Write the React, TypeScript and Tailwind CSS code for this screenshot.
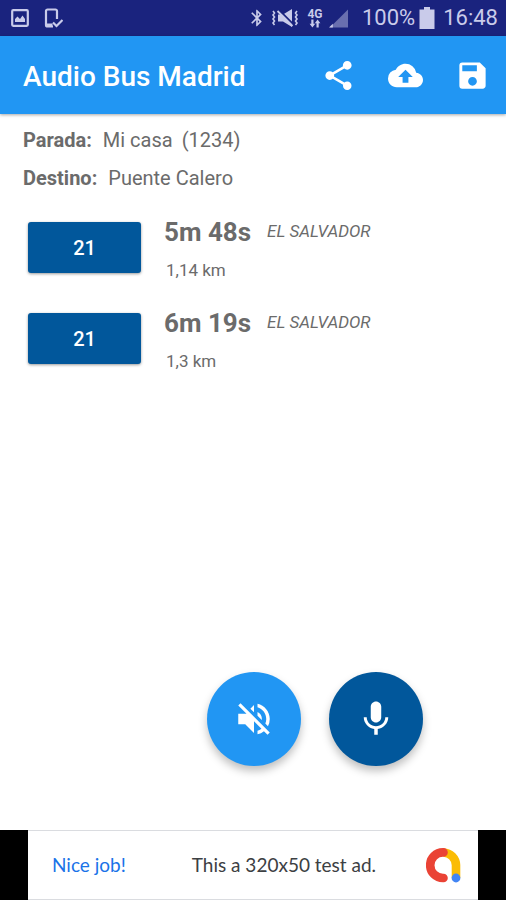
import type { ReactNode } from "react";
import {
  MdBluetooth,
  MdCloudUpload,
  MdMic,
  MdSave,
  MdShare,
  MdVolumeOff,
} from "react-icons/md";
import { clsx } from "clsx";

interface Arrival {
  id: number;
  line: string;
  time: string;
  destination: string;
  distance: string;
}

const arrivals: Arrival[] = [
  { id: 1, line: "21", time: "5m 48s", destination: "EL SALVADOR", distance: "1,14 km" },
  { id: 2, line: "21", time: "6m 19s", destination: "EL SALVADOR", distance: "1,3 km" },
];

const PictureIcon = () => (
  <svg className="h-[18px] w-[18px]" viewBox="0 0 18 18" fill="none" aria-hidden="true">
    <rect x="1.2" y="1.2" width="15.6" height="15.6" rx="1" stroke="currentColor" strokeWidth="2.2" />
    <path d="M4 13v-3l2.500-2.500L9 10l2.500-3.500L14 10v3z" fill="currentColor" />
  </svg>
);

const PhoneCheckIcon = () => (
  <svg className="h-5 w-5" viewBox="0 0 20 20" fill="none" aria-hidden="true">
    <path
      d="M14 11V3a1.500 1.500 0 0 0-1.500-1.500h-8A1.500 1.500 0 0 0 3 3v14a1.500 1.500 0 0 0 1.500 1.500H10"
      stroke="currentColor"
      strokeWidth="2.2"
    />
    <path d="M3 15.500h6.500V19H3z" fill="currentColor" />
    <path d="M10 14.500l3.500 3.500 6-6" stroke="currentColor" strokeWidth="2.2" />
  </svg>
);

const VibrateMuteIcon = () => (
  <svg className="h-5 w-7" viewBox="0 0 28 20" fill="none" aria-hidden="true">
    <path
      d="M2 3l1.500 2L2 7l1.500 2L2 11l1.500 2L2 15l1.500 2M26 3l-1.500 2L26 7l-1.500 2L26 11l-1.500 2 1.500 2-1.500 2"
      stroke="currentColor"
      strokeWidth="1.600"
    />
    <path d="M7 6.500h5l9-5.500v18l-9-5.500H7z" fill="currentColor" />
    <path d="M8 2l14 14" stroke="#1a237e" strokeWidth="1.800" />
    <path d="M6.500 3l15 15" stroke="currentColor" strokeWidth="1.800" />
  </svg>
);

const NetworkIcon = () => (
  <span className="flex w-4 flex-col items-center">
    <span className="text-[12px] leading-[10px] font-bold">4G</span>
    <svg className="h-[9px] w-3" viewBox="0 0 12 8" fill="currentColor" aria-hidden="true">
      <path d="M2.300 0h2.200v4.300H6.200L3.400 8 .6 4.300h1.700zM7.500 8h2.200V3.700h1.700L8.600 0 5.800 3.700h1.700z" />
    </svg>
  </span>
);

const SignalIcon = () => (
  <svg className="h-[19px] w-[19px]" viewBox="0 0 20 19" fill="currentColor" aria-hidden="true">
    <path d="M20 0v19H1z" opacity="0.45" />
    <path d="M0 19h4v-4z" />
  </svg>
);

const BatteryIcon = () => (
  <svg className="h-[22px] w-4" viewBox="0 0 16 22" fill="currentColor" aria-hidden="true">
    <path d="M5 0h6v2.500h4.500V22H.5V2.500H5z" />
  </svg>
);

const AdLogo = () => (
  <svg className="h-[35px] w-[35px]" viewBox="0 0 35 35" fill="none" aria-hidden="true">
    <path d="M17.500 4.500A13 13 0 0 1 30 17v13" stroke="#fbbc04" strokeWidth="8.600" />
    <path
      d="M17.500 4.400h-.5a12.800 12.800 0 0 0 0 25.600h.5"
      stroke="#ea4335"
      strokeWidth="8.600"
      strokeLinecap="round"
    />
    <circle cx="30" cy="30" r="4.400" fill="#4285f4" />
  </svg>
);

const StatusBar = () => (
  <div className="flex h-9 items-center justify-between bg-[#1a237e] pr-2 pl-[11px] text-[#c9cbea]">
    <div className="flex items-center gap-[14px]">
      <PictureIcon />
      <PhoneCheckIcon />
    </div>
    <div className="flex items-center">
      <MdBluetooth className="mr-1 h-5 w-5 stroke-current" />
      <VibrateMuteIcon />
      <span className="flex items-center gap-[6px] pl-2">
        <NetworkIcon />
        <SignalIcon />
      </span>
      <span className="pr-1 pl-[14px] text-[22px] leading-9">100%</span>
      <BatteryIcon />
      <span className="pl-2 text-[22px] leading-9">16:48</span>
    </div>
  </div>
);

const ToolbarButton = ({ label, children }: { label: string; children: ReactNode }) => (
  <button type="button" aria-label={label} className="text-white">
    {children}
  </button>
);

const Toolbar = () => (
  <header className="relative flex h-[78px] items-center justify-between bg-[#2196f3] pr-4 pl-[23px] shadow-[0_1px_3px_rgba(0,0,0,0.35)]">
    <h1 className="pt-1 text-[28px] font-medium text-white">Audio Bus Madrid</h1>
    <div className="flex items-center gap-8">
      <ToolbarButton label="Compartir">
        <MdShare className="h-[35px] w-[35px]" />
      </ToolbarButton>
      <ToolbarButton label="Subir">
        <MdCloudUpload className="h-[35px] w-[35px]" />
      </ToolbarButton>
      <ToolbarButton label="Guardar">
        <MdSave className="h-[35px] w-[35px]" />
      </ToolbarButton>
    </div>
  </header>
);

const ArrivalRow = ({ line, time, destination, distance }: Omit<Arrival, "id">) => (
  <li className="flex items-start gap-[23px]">
    <button
      type="button"
      className="h-[51px] w-[113px] rounded-[3px] bg-[#01579b] text-xl font-medium text-white shadow-[0_1px_3px_rgba(0,0,0,0.4)]"
    >
      {line}
    </button>
    <div>
      <div className="flex items-start gap-4">
        <span className="text-[26px] leading-5 font-bold">{time}</span>
        <span className="text-[17px] leading-[18px] italic">{destination}</span>
      </div>
      <p className="pt-[18px] pl-[2px] text-[17px] leading-5">{distance}</p>
    </div>
  </li>
);

interface FabProps {
  label: string;
  className: string;
  children: ReactNode;
}

const Fab = ({ label, className, children }: FabProps) => (
  <button
    type="button"
    aria-label={label}
    className={clsx(
      "flex h-[94px] w-[94px] items-center justify-center rounded-full text-white",
      "shadow-[0_5px_8px_rgba(0,0,0,0.25)]",
      className
    )}
  >
    {children}
  </button>
);

const AdBanner = () => (
  <footer className="bg-black px-7">
    <div className="flex h-[70px] items-center justify-between border-y border-[#dadce0] bg-white pr-[17px] pl-6 font-['Lato',sans-serif] text-[19px]">
      <a href="#ad" className="text-[#1a73e8]">
        Nice job!
      </a>
      <span className="pl-4 text-[#3c4043]">This a 320x50 test ad.</span>
      <AdLogo />
    </div>
  </footer>
);

export default function App() {
  return (
    <div className="flex min-h-screen flex-col bg-white font-['Roboto',sans-serif] text-[#6b6b6b]">
      <StatusBar />
      <Toolbar />
      <main className="flex flex-1 flex-col">
        <dl className="flex flex-col gap-[10px] px-[23px] pt-3 text-[20px] leading-7">
          <div className="flex gap-[11px]">
            <dt className="font-bold">Parada:</dt>
            <dd className="flex gap-[9px]">
              <span>Mi casa</span>
              <span>(1234)</span>
            </dd>
          </div>
          <div className="flex gap-[11px]">
            <dt className="font-bold">Destino:</dt>
            <dd>Puente Calero</dd>
          </div>
        </dl>
        <ul className="flex flex-col gap-[33px] px-7 pt-[30px]">
          {arrivals.map(({ id, ...arrival }) => (
            <ArrivalRow key={id} {...arrival} />
          ))}
        </ul>
        <div className="mt-auto flex justify-end gap-7 pr-[83px] pb-16">
          <Fab label="Silenciar" className="bg-[#2196f3]">
            <MdVolumeOff className="h-[42px] w-[42px]" />
          </Fab>
          <Fab label="Hablar" className="bg-[#01579b]">
            <MdMic className="h-[42px] w-[42px]" />
          </Fab>
        </div>
      </main>
      <AdBanner />
    </div>
  );
}
